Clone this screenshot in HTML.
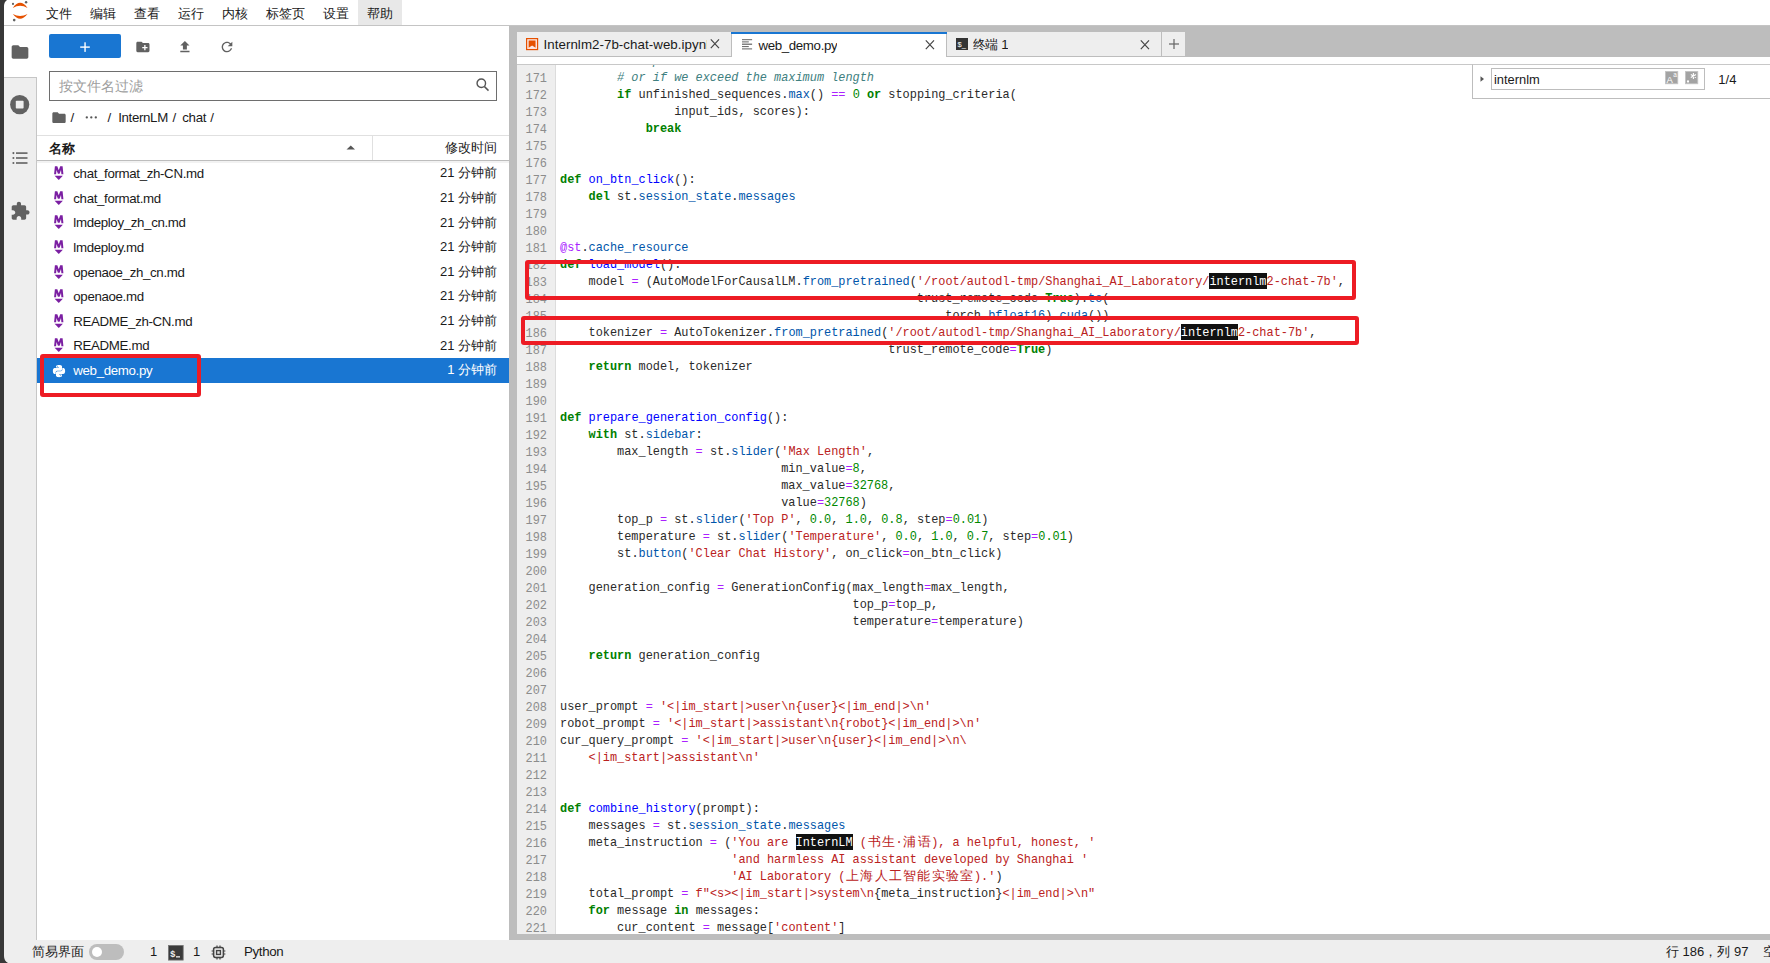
<!DOCTYPE html>
<html><head><meta charset="utf-8">
<style>
*{box-sizing:border-box;margin:0;padding:0}
html,body{width:1770px;height:963px;overflow:hidden;background:#fff}
body{position:relative;font-family:"Liberation Sans",sans-serif;font-size:12.7px;color:#1a1a1a}
.a{position:absolute}
.ui{font-family:"Liberation Sans",sans-serif;white-space:nowrap;line-height:1}
svg{position:absolute;overflow:visible}
/* menu */
#menubar{left:0;top:0;width:1770px;height:26px;background:#fff;border-bottom:1px solid #c4c4c4}
.mi{position:absolute;top:5.5px;font-size:13px;color:#1a1a1a;line-height:15px}
/* sidebar */
#side{left:4px;top:26px;width:33px;height:914px;background:#eeeeee;border-right:1px solid #c6c6c6}
#sideact{left:4px;top:26px;width:33px;height:52px;background:#fff;border-bottom:1px solid #c6c6c6}
/* file browser */
#fb{left:37px;top:26px;width:472px;height:914px;background:#fff}
.row{position:absolute;left:37px;width:472px;height:24.625px}
.fname{position:absolute;left:36.3px;top:5.1px;font-size:13.3px;letter-spacing:-0.35px;line-height:15px;color:#1a1a1a;white-space:nowrap}
.ftime{position:absolute;right:12px;top:4.3px;font-size:13px;line-height:15px;color:#1a1a1a;white-space:nowrap}
/* dock */
#dock{left:509px;top:26px;width:1261px;height:914px;background:#bdbdbd}
.tab{position:absolute;top:31px;height:26px;background:#eeeeee;border:1px solid #bdbdbd}
.tabt{position:absolute;top:37.6px;font-size:13.3px;letter-spacing:-0.35px;line-height:15px;color:#1a1a1a;white-space:nowrap;overflow:hidden}
#strip{left:517px;top:57px;width:1253px;height:8px;background:#fff;border-bottom:1px solid #c8c8c8}
#editor{left:517px;top:65px;width:1253px;height:869px;background:#fff;overflow:hidden}
#gutter{left:517px;top:65px;width:39px;height:869px;background:#eeeeee;border-right:1px solid #dcdcdc}
#codeclip{left:517px;top:65px;width:1253px;height:869px;overflow:hidden}
.ln{position:absolute;left:0;width:30px;text-align:right;font-family:"Liberation Mono",monospace;font-size:11.9px;line-height:17px;height:17px;color:#8c8c8c}
.cl{position:absolute;left:43px;white-space:pre;font-family:"Liberation Mono",monospace;font-size:11.9px;line-height:17px;height:17px;color:#2a2a2a}
.cj{font-style:normal;display:inline-block;width:14.294px;text-align:center;font-size:12.5px}
.c{color:#408080;font-style:italic}
.k{color:#008000;font-weight:bold}
.n{color:#008800}
.o{color:#aa22ff}
.d{color:#0000ff}
.p{color:#0055aa}
.s{color:#ba2121}
.m{color:#aa22ff}
.v{color:#2a2a2a}
.hl{background:#111;color:#fff;font-weight:normal;padding-top:1.6px}
.s .hl{color:#fff}
/* status */
#status{left:4px;top:940px;width:1766px;height:23px;background:#eeeeee}
.st{position:absolute;top:944.3px;font-size:13px;line-height:15px;color:#1a1a1a;white-space:nowrap}
.crumb{top:110px;font-size:13.3px;letter-spacing:-0.35px;line-height:15px;color:#1a1a1a}
.redbox{position:absolute;border:4px solid #ed1c24;border-radius:3px}
</style></head><body>

<!-- menubar -->
<div id="menubar" class="a"></div>
<div class="a" style="left:358px;top:0;width:44px;height:25px;background:#e8e8e8"></div>
<svg style="left:0;top:0" width="40" height="25" viewBox="0 0 40 25">
  <path d="M12.8 7.9 Q20.1 -2.2 27.5 7.9 Q20.1 3.6 12.8 7.9Z" fill="#e65100"/>
  <path d="M12.8 14 Q20.1 23.4 27.5 14 Q20.1 17.8 12.8 14Z" fill="#e65100"/>
  <circle cx="13" cy="3.9" r="1.05" fill="#616161"/>
  <circle cx="26.1" cy="2.3" r="1.2" fill="#616161"/>
  <circle cx="14.2" cy="20.1" r="1.3" fill="#616161"/>
</svg>
<div class="mi" style="left:46px">文件</div>
<div class="mi" style="left:90px">编辑</div>
<div class="mi" style="left:134px">查看</div>
<div class="mi" style="left:178px">运行</div>
<div class="mi" style="left:222px">内核</div>
<div class="mi" style="left:266px">标签页</div>
<div class="mi" style="left:323px">设置</div>
<div class="mi" style="left:367px">帮助</div>

<!-- left activity bar -->
<div id="side" class="a"></div>
<div id="sideact" class="a"></div>
<svg style="left:9.7px;top:42px" width="20" height="20" viewBox="0 0 24 24"><path fill="#616161" d="M10 4H4c-1.1 0-1.99.9-1.99 2L2 18c0 1.1.9 2 2 2h16c1.1 0 2-.9 2-2V8c0-1.1-.9-2-2-2h-8l-2-2z"/></svg>
<svg style="left:10px;top:95px" width="20" height="20" viewBox="0 0 20 20"><circle cx="9.7" cy="9.6" r="9.6" fill="#616161"/><rect x="5.8" y="5.7" width="7.8" height="7.8" rx="0.8" fill="#eeeeee"/></svg>
<svg style="left:12px;top:151px" width="18" height="14" viewBox="0 0 18 14">
  <circle cx="1.4" cy="2.1" r="1.05" fill="#616161"/><rect x="4" y="1.3" width="11.5" height="1.6" fill="#616161"/>
  <circle cx="1.4" cy="7" r="1.05" fill="#616161"/><rect x="4" y="6.2" width="11.5" height="1.6" fill="#616161"/>
  <circle cx="1.4" cy="12" r="1.05" fill="#616161"/><rect x="4" y="11.2" width="11.5" height="1.6" fill="#616161"/>
</svg>
<svg style="left:9.7px;top:201.3px" width="20.4" height="20.4" viewBox="0 0 24 24"><path fill="#616161" d="M20.5 11H19V7c0-1.1-.9-2-2-2h-4V3.5C13 2.12 11.88 1 10.5 1S8 2.12 8 3.5V5H4c-1.1 0-1.99.9-1.99 2v3.8H3.5c1.49 0 2.7 1.21 2.7 2.7s-1.21 2.7-2.7 2.7H2V20c0 1.1.9 2 2 2h3.8v-1.5c0-1.490 1.21-2.7 2.7-2.7 1.49 0 2.7 1.21 2.7 2.7V22H17c1.1 0 2-.9 2-2v-4h1.5c1.38 0 2.5-1.12 2.5-2.5S21.88 11 20.5 11z"/></svg>

<!-- file browser -->
<div id="fb" class="a"></div>
<div class="a" style="left:49px;top:34px;width:72px;height:24px;background:#1976d2;border-radius:2px"></div>
<svg style="left:79px;top:41px" width="12" height="12" viewBox="0 0 12 12"><rect x="5.35" y="1.3" width="1.4" height="9.6" fill="#fff"/><rect x="1.2" y="5.4" width="9.6" height="1.4" fill="#fff"/></svg>
<svg style="left:135px;top:38.9px" width="15.8" height="15.8" viewBox="0 0 24 24"><path fill="#616161" d="M20 6h-8l-2-2H4c-1.11 0-1.99.89-1.99 2L2 18c0 1.11.89 2 2 2h16c1.11 0 2-.89 2-2V8c0-1.11-.89-2-2-2zm-1 8h-3v3h-2v-3h-3v-2h3V9h2v3h3v2z"/></svg>
<svg style="left:176.6px;top:39.2px" width="15.8" height="15.8" viewBox="0 0 24 24"><path fill="#616161" d="M9 16h6v-6h4l-7-7-7 7h4zm-4 2h14v2H5z"/></svg>
<svg style="left:219.2px;top:38.9px" width="16" height="16" viewBox="0 0 24 24"><path fill="#616161" d="M17.65 6.35C16.2 4.9 14.21 4 12 4c-4.42 0-7.99 3.580-7.99 8s3.57 8 7.99 8c3.73 0 6.84-2.55 7.73-6h-2.08c-.82 2.33-3.04 4-5.65 4-3.31 0-6-2.69-6-6s2.69-6 6-6c1.66 0 3.14.69 4.22 1.78L13 11h7V4l-2.35 2.35z"/></svg>
<div class="a" style="left:49px;top:71px;width:448px;height:30px;border:1px solid #6e6e6e;background:#fff"></div>
<div class="a ui" style="left:58.8px;top:79.4px;font-size:14px;line-height:15px;color:#9e9e9e">按文件名过滤</div>
<svg style="left:474px;top:76px" width="18" height="18" viewBox="0 0 18 18"><circle cx="7.3" cy="7.3" r="4.25" fill="none" stroke="#555" stroke-width="1.4"/><line x1="10.5" y1="10.6" x2="14.5" y2="14.6" stroke="#555" stroke-width="1.5"/></svg>
<svg style="left:51px;top:111px" width="16" height="14" viewBox="0 0 24 21"><path fill="#616161" d="M10 4H4c-1.1 0-1.99.9-1.99 2L2 18c0 1.1.9 2 2 2h16c1.1 0 2-.9 2-2V8c0-1.1-.9-2-2-2h-8l-2-2z" transform="translate(0,-2)"/></svg>

<svg style="left:85px;top:115px" width="14" height="5" viewBox="0 0 14 5"><circle cx="1.8" cy="2.4" r="1.15" fill="#555"/><circle cx="6.3" cy="2.4" r="1.15" fill="#555"/><circle cx="10.8" cy="2.4" r="1.15" fill="#555"/></svg>
<div class="a ui crumb" style="left:70.4px">/</div><div class="a ui crumb" style="left:107.5px">/</div><div class="a ui crumb" style="left:118.2px">InternLM</div><div class="a ui crumb" style="left:172.6px">/</div><div class="a ui crumb" style="left:182.3px">chat</div><div class="a ui crumb" style="left:210.3px">/</div>

<!-- listing header -->
<div class="a" style="left:37px;top:135px;width:472px;height:1px;background:#e0e0e0"></div>
<div class="a" style="left:37px;top:160px;width:472px;height:1px;background:#bdbdbd"></div>
<div class="a" style="left:37px;top:161px;width:472px;height:1.5px;background:#f2f2f2"></div>
<div class="a" style="left:372px;top:136px;width:1px;height:24px;background:#e0e0e0"></div>
<div class="a ui" style="left:49px;top:140.5px;font-size:13px;line-height:15px;font-weight:bold;color:#1a1a1a">名称</div>
<svg style="left:345.5px;top:144.9px" width="10" height="5" viewBox="0 0 10 5"><path d="M0.5 4.6 L4.8 0.4 L9 4.6Z" fill="#555"/></svg>
<div class="a ui" style="left:445.4px;top:139.5px;font-size:13px;line-height:15px;color:#1a1a1a">修改时间</div>

<div class="row" style="top:161.000px;"><svg style="left:17px;top:5px" width="10" height="15" viewBox="0 0 10 15"><path fill="#7b1fa2" d="M0.1 8.2 L0.9 0.2 H3.3 L4.75 4.3 L6.2 0.2 H8.6 L9.4 8.2 H7.4 L7.0 3.9 L5.6 7.7 H3.9 L2.5 3.9 L2.1 8.2Z"/><path fill="#7b1fa2" d="M0.6 9.7 H8.9 L4.75 14.1 Z"/></svg><div class="fname" style="color:#1a1a1a">chat_format_zh-CN.md</div><div class="ftime" style="color:#1a1a1a">21 分钟前</div></div>
<div class="row" style="top:185.625px;"><svg style="left:17px;top:5px" width="10" height="15" viewBox="0 0 10 15"><path fill="#7b1fa2" d="M0.1 8.2 L0.9 0.2 H3.3 L4.75 4.3 L6.2 0.2 H8.6 L9.4 8.2 H7.4 L7.0 3.9 L5.6 7.7 H3.9 L2.5 3.9 L2.1 8.2Z"/><path fill="#7b1fa2" d="M0.6 9.7 H8.9 L4.75 14.1 Z"/></svg><div class="fname" style="color:#1a1a1a">chat_format.md</div><div class="ftime" style="color:#1a1a1a">21 分钟前</div></div>
<div class="row" style="top:210.250px;"><svg style="left:17px;top:5px" width="10" height="15" viewBox="0 0 10 15"><path fill="#7b1fa2" d="M0.1 8.2 L0.9 0.2 H3.3 L4.75 4.3 L6.2 0.2 H8.6 L9.4 8.2 H7.4 L7.0 3.9 L5.6 7.7 H3.9 L2.5 3.9 L2.1 8.2Z"/><path fill="#7b1fa2" d="M0.6 9.7 H8.9 L4.75 14.1 Z"/></svg><div class="fname" style="color:#1a1a1a">lmdeploy_zh_cn.md</div><div class="ftime" style="color:#1a1a1a">21 分钟前</div></div>
<div class="row" style="top:234.875px;"><svg style="left:17px;top:5px" width="10" height="15" viewBox="0 0 10 15"><path fill="#7b1fa2" d="M0.1 8.2 L0.9 0.2 H3.3 L4.75 4.3 L6.2 0.2 H8.6 L9.4 8.2 H7.4 L7.0 3.9 L5.6 7.7 H3.9 L2.5 3.9 L2.1 8.2Z"/><path fill="#7b1fa2" d="M0.6 9.7 H8.9 L4.75 14.1 Z"/></svg><div class="fname" style="color:#1a1a1a">lmdeploy.md</div><div class="ftime" style="color:#1a1a1a">21 分钟前</div></div>
<div class="row" style="top:259.500px;"><svg style="left:17px;top:5px" width="10" height="15" viewBox="0 0 10 15"><path fill="#7b1fa2" d="M0.1 8.2 L0.9 0.2 H3.3 L4.75 4.3 L6.2 0.2 H8.6 L9.4 8.2 H7.4 L7.0 3.9 L5.6 7.7 H3.9 L2.5 3.9 L2.1 8.2Z"/><path fill="#7b1fa2" d="M0.6 9.7 H8.9 L4.75 14.1 Z"/></svg><div class="fname" style="color:#1a1a1a">openaoe_zh_cn.md</div><div class="ftime" style="color:#1a1a1a">21 分钟前</div></div>
<div class="row" style="top:284.125px;"><svg style="left:17px;top:5px" width="10" height="15" viewBox="0 0 10 15"><path fill="#7b1fa2" d="M0.1 8.2 L0.9 0.2 H3.3 L4.75 4.3 L6.2 0.2 H8.6 L9.4 8.2 H7.4 L7.0 3.9 L5.6 7.7 H3.9 L2.5 3.9 L2.1 8.2Z"/><path fill="#7b1fa2" d="M0.6 9.7 H8.9 L4.75 14.1 Z"/></svg><div class="fname" style="color:#1a1a1a">openaoe.md</div><div class="ftime" style="color:#1a1a1a">21 分钟前</div></div>
<div class="row" style="top:308.750px;"><svg style="left:17px;top:5px" width="10" height="15" viewBox="0 0 10 15"><path fill="#7b1fa2" d="M0.1 8.2 L0.9 0.2 H3.3 L4.75 4.3 L6.2 0.2 H8.6 L9.4 8.2 H7.4 L7.0 3.9 L5.6 7.7 H3.9 L2.5 3.9 L2.1 8.2Z"/><path fill="#7b1fa2" d="M0.6 9.7 H8.9 L4.75 14.1 Z"/></svg><div class="fname" style="color:#1a1a1a">README_zh-CN.md</div><div class="ftime" style="color:#1a1a1a">21 分钟前</div></div>
<div class="row" style="top:333.375px;"><svg style="left:17px;top:5px" width="10" height="15" viewBox="0 0 10 15"><path fill="#7b1fa2" d="M0.1 8.2 L0.9 0.2 H3.3 L4.75 4.3 L6.2 0.2 H8.6 L9.4 8.2 H7.4 L7.0 3.9 L5.6 7.7 H3.9 L2.5 3.9 L2.1 8.2Z"/><path fill="#7b1fa2" d="M0.6 9.7 H8.9 L4.75 14.1 Z"/></svg><div class="fname" style="color:#1a1a1a">README.md</div><div class="ftime" style="color:#1a1a1a">21 分钟前</div></div>
<div class="row" style="top:358.000px;background:#1976d2;"><svg style="left:14.9px;top:5.9px" width="14" height="14" viewBox="0 0 24 24"><path fill="#fff" d="M11.9 1.5c-5.3 0-5 2.3-5 2.3v2.4h5.1v.7H4.9S1.5 6.5 1.5 11.9s3 5.2 3 5.2h1.8v-2.5s-.1-3 3-3h5c0 0 2.9 0 2.9-2.8V4.3s.4-2.8-5.3-2.8zM9.1 3.1c.5 0 .9.4.9.9s-.4.9-.9.9-.9-.4-.9-.9.4-.9.9-.9z"/><path fill="#fff" d="M12.1 22.5c5.3 0 5-2.3 5-2.3v-2.4h-5.1v-.7h7.1s3.4.4 3.4-5s-3-5.2-3-5.2h-1.8v2.5s.1 3-3 3h-5s-2.9 0-2.9 2.8v4.6s-.4 2.8 5.3 2.8zm2.8-1.6c-.5 0-.9-.4-.9-.9s.4-.9.9-.9.9.4.9.9-.4.9-.9.9z"/></svg><div class="fname" style="color:#fff">web_demo.py</div><div class="ftime" style="color:#fff">1 分钟前</div></div>

<!-- dock / editor -->
<div id="dock" class="a"></div>
<div class="tab" style="left:516px;width:216px"></div>
<div class="tab" style="left:946px;width:216px"></div>
<div class="tab" style="left:1161px;width:25px"></div>
<div class="tab" style="left:731px;width:216px;background:#fff;border-bottom:none;height:26px;border-top:none;top:32px"></div>
<div class="a" style="left:731px;top:32px;width:216px;height:2px;background:#1976d2"></div>
<!-- tab icons/text -->
<svg style="left:525.8px;top:37.8px" width="12.2" height="12.2" viewBox="0 0 12 12"><rect x="0.6" y="0.6" width="10.8" height="10.8" fill="#fbe9e7" stroke="#e65100" stroke-width="1.2"/><path d="M2.6 2.4 H9.4 V9.6 L6 7.4 L2.6 9.6Z" fill="#e65100"/></svg>
<div class="tabt" style="left:543.5px;width:163px;letter-spacing:0.06px;top:36.8px">Internlm2-7b-chat-web.ipynb</div>
<svg style="left:709px;top:38px" width="12" height="12" viewBox="0 0 12 12"><path d="M1.8 1.4 L10 10.1 M10 1.4 L1.8 10.1" stroke="#444" stroke-width="1.2"/></svg>
<svg style="left:741.9px;top:38.6px" width="11" height="11" viewBox="0 0 11 11"><rect x="0" y="0.2" width="10.1" height="1" fill="#616161"/><rect x="0" y="2.4" width="6.8" height="1" fill="#616161"/><rect x="0" y="4.6" width="10.1" height="1.2" fill="#616161"/><rect x="0" y="7.1" width="6.8" height="1" fill="#616161"/><rect x="0" y="9.4" width="10.1" height="1" fill="#616161"/></svg>
<div class="tabt" style="left:758.4px">web_demo.py</div>
<svg style="left:924px;top:39.2px" width="12" height="12" viewBox="0 0 12 12"><path d="M1.8 1.4 L10 10.1 M10 1.4 L1.8 10.1" stroke="#444" stroke-width="1.2"/></svg>
<svg style="left:956px;top:38px" width="12" height="12" viewBox="0 0 12 12"><rect x="0" y="0" width="12" height="12" fill="#333"/><text x="1.5" y="9" font-family="Liberation Sans" font-size="7.5" fill="#fff">$_</text></svg>
<div class="tabt" style="left:972.6px;top:36.8px">终端 1</div>
<svg style="left:1139px;top:38.7px" width="12" height="12" viewBox="0 0 12 12"><path d="M1.8 1.4 L10 10.1 M10 1.4 L1.8 10.1" stroke="#444" stroke-width="1.2"/></svg>
<svg style="left:1168px;top:38px" width="12" height="12" viewBox="0 0 12 12"><rect x="5.4" y="1" width="1.2" height="10" fill="#666"/><rect x="1" y="5.4" width="10" height="1.2" fill="#666"/></svg>

<div id="strip" class="a"></div>
<div id="editor" class="a"></div>
<div id="gutter" class="a"></div>
<div id="codeclip" class="a">
<div class="ln" style="top:-11.40px">170</div>
<div class="ln" style="top:5.60px">171</div>
<div class="ln" style="top:22.60px">172</div>
<div class="ln" style="top:39.60px">173</div>
<div class="ln" style="top:56.60px">174</div>
<div class="ln" style="top:73.60px">175</div>
<div class="ln" style="top:90.60px">176</div>
<div class="ln" style="top:107.60px">177</div>
<div class="ln" style="top:124.60px">178</div>
<div class="ln" style="top:141.60px">179</div>
<div class="ln" style="top:158.60px">180</div>
<div class="ln" style="top:175.60px">181</div>
<div class="ln" style="top:192.60px">182</div>
<div class="ln" style="top:209.60px">183</div>
<div class="ln" style="top:226.60px">184</div>
<div class="ln" style="top:243.60px">185</div>
<div class="ln" style="top:260.60px">186</div>
<div class="ln" style="top:277.60px">187</div>
<div class="ln" style="top:294.60px">188</div>
<div class="ln" style="top:311.60px">189</div>
<div class="ln" style="top:328.60px">190</div>
<div class="ln" style="top:345.60px">191</div>
<div class="ln" style="top:362.60px">192</div>
<div class="ln" style="top:379.60px">193</div>
<div class="ln" style="top:396.60px">194</div>
<div class="ln" style="top:413.60px">195</div>
<div class="ln" style="top:430.60px">196</div>
<div class="ln" style="top:447.60px">197</div>
<div class="ln" style="top:464.60px">198</div>
<div class="ln" style="top:481.60px">199</div>
<div class="ln" style="top:498.60px">200</div>
<div class="ln" style="top:515.60px">201</div>
<div class="ln" style="top:532.60px">202</div>
<div class="ln" style="top:549.60px">203</div>
<div class="ln" style="top:566.60px">204</div>
<div class="ln" style="top:583.60px">205</div>
<div class="ln" style="top:600.60px">206</div>
<div class="ln" style="top:617.60px">207</div>
<div class="ln" style="top:634.60px">208</div>
<div class="ln" style="top:651.60px">209</div>
<div class="ln" style="top:668.60px">210</div>
<div class="ln" style="top:685.60px">211</div>
<div class="ln" style="top:702.60px">212</div>
<div class="ln" style="top:719.60px">213</div>
<div class="ln" style="top:736.60px">214</div>
<div class="ln" style="top:753.60px">215</div>
<div class="ln" style="top:770.60px">216</div>
<div class="ln" style="top:787.60px">217</div>
<div class="ln" style="top:804.60px">218</div>
<div class="ln" style="top:821.60px">219</div>
<div class="ln" style="top:838.60px">220</div>
<div class="ln" style="top:855.60px">221</div>
<div class="cl" style="top:-12.20px">        <span class="c"># stop when each sentence is finished</span></div>
<div class="cl" style="top:4.80px">        <span class="c"># or if we exceed the maximum length</span></div>
<div class="cl" style="top:21.80px">        <span class="k">if</span> <span class="v">unfinished_sequences</span>.<span class="p">max</span>() <span class="o">==</span> <span class="n">0</span> <span class="k">or</span> <span class="v">stopping_criteria</span>(</div>
<div class="cl" style="top:38.80px">                <span class="v">input_ids</span>, <span class="v">scores</span>):</div>
<div class="cl" style="top:55.80px">            <span class="k">break</span></div>
<div class="cl" style="top:72.80px"></div>
<div class="cl" style="top:89.80px"></div>
<div class="cl" style="top:106.80px"><span class="k">def</span> <span class="d">on_btn_click</span>():</div>
<div class="cl" style="top:123.80px">    <span class="k">del</span> <span class="v">st</span>.<span class="p">session_state</span>.<span class="p">messages</span></div>
<div class="cl" style="top:140.80px"></div>
<div class="cl" style="top:157.80px"></div>
<div class="cl" style="top:174.80px"><span class="m">@st</span>.<span class="p">cache_resource</span></div>
<div class="cl" style="top:191.80px"><span class="k">def</span> <span class="d">load_model</span>():</div>
<div class="cl" style="top:208.80px">    <span class="v">model</span> <span class="o">=</span> (<span class="v">AutoModelForCausalLM</span>.<span class="p">from_pretrained</span>(<span class="s">&#x27;/root/autodl-tmp/Shanghai_AI_Laboratory/<b class="hl">internlm</b>2-chat-7b&#x27;</span>,</div>
<div class="cl" style="top:225.80px">                                                  <span class="v">trust_remote_code</span><span class="o">=</span><span class="k">True</span>).<span class="p">to</span>(</div>
<div class="cl" style="top:242.80px">                                                      <span class="v">torch</span>.<span class="p">bfloat16</span>).<span class="p">cuda</span>())</div>
<div class="cl" style="top:259.80px">    <span class="v">tokenizer</span> <span class="o">=</span> <span class="v">AutoTokenizer</span>.<span class="p">from_pretrained</span>(<span class="s">&#x27;/root/autodl-tmp/Shanghai_AI_Laboratory/<b class="hl">internlm</b>2-chat-7b&#x27;</span>,</div>
<div class="cl" style="top:276.80px">                                              <span class="v">trust_remote_code</span><span class="o">=</span><span class="k">True</span>)</div>
<div class="cl" style="top:293.80px">    <span class="k">return</span> <span class="v">model</span>, <span class="v">tokenizer</span></div>
<div class="cl" style="top:310.80px"></div>
<div class="cl" style="top:327.80px"></div>
<div class="cl" style="top:344.80px"><span class="k">def</span> <span class="d">prepare_generation_config</span>():</div>
<div class="cl" style="top:361.80px">    <span class="k">with</span> <span class="v">st</span>.<span class="p">sidebar</span>:</div>
<div class="cl" style="top:378.80px">        <span class="v">max_length</span> <span class="o">=</span> <span class="v">st</span>.<span class="p">slider</span>(<span class="s">&#x27;Max Length&#x27;</span>,</div>
<div class="cl" style="top:395.80px">                               <span class="v">min_value</span><span class="o">=</span><span class="n">8</span>,</div>
<div class="cl" style="top:412.80px">                               <span class="v">max_value</span><span class="o">=</span><span class="n">32768</span>,</div>
<div class="cl" style="top:429.80px">                               <span class="v">value</span><span class="o">=</span><span class="n">32768</span>)</div>
<div class="cl" style="top:446.80px">        <span class="v">top_p</span> <span class="o">=</span> <span class="v">st</span>.<span class="p">slider</span>(<span class="s">&#x27;Top P&#x27;</span>, <span class="n">0.0</span>, <span class="n">1.0</span>, <span class="n">0.8</span>, <span class="v">step</span><span class="o">=</span><span class="n">0.01</span>)</div>
<div class="cl" style="top:463.80px">        <span class="v">temperature</span> <span class="o">=</span> <span class="v">st</span>.<span class="p">slider</span>(<span class="s">&#x27;Temperature&#x27;</span>, <span class="n">0.0</span>, <span class="n">1.0</span>, <span class="n">0.7</span>, <span class="v">step</span><span class="o">=</span><span class="n">0.01</span>)</div>
<div class="cl" style="top:480.80px">        <span class="v">st</span>.<span class="p">button</span>(<span class="s">&#x27;Clear Chat History&#x27;</span>, <span class="v">on_click</span><span class="o">=</span><span class="v">on_btn_click</span>)</div>
<div class="cl" style="top:497.80px"></div>
<div class="cl" style="top:514.80px">    <span class="v">generation_config</span> <span class="o">=</span> <span class="v">GenerationConfig</span>(<span class="v">max_length</span><span class="o">=</span><span class="v">max_length</span>,</div>
<div class="cl" style="top:531.80px">                                         <span class="v">top_p</span><span class="o">=</span><span class="v">top_p</span>,</div>
<div class="cl" style="top:548.80px">                                         <span class="v">temperature</span><span class="o">=</span><span class="v">temperature</span>)</div>
<div class="cl" style="top:565.80px"></div>
<div class="cl" style="top:582.80px">    <span class="k">return</span> <span class="v">generation_config</span></div>
<div class="cl" style="top:599.80px"></div>
<div class="cl" style="top:616.80px"></div>
<div class="cl" style="top:633.80px"><span class="v">user_prompt</span> <span class="o">=</span> <span class="s">&#x27;&lt;|im_start|&gt;user\n{user}&lt;|im_end|&gt;\n&#x27;</span></div>
<div class="cl" style="top:650.80px"><span class="v">robot_prompt</span> <span class="o">=</span> <span class="s">&#x27;&lt;|im_start|&gt;assistant\n{robot}&lt;|im_end|&gt;\n&#x27;</span></div>
<div class="cl" style="top:667.80px"><span class="v">cur_query_prompt</span> <span class="o">=</span> <span class="s">&#x27;&lt;|im_start|&gt;user\n{user}&lt;|im_end|&gt;\n\</span></div>
<div class="cl" style="top:684.80px"><span class="s">    &lt;|im_start|&gt;assistant\n&#x27;</span></div>
<div class="cl" style="top:701.80px"></div>
<div class="cl" style="top:718.80px"></div>
<div class="cl" style="top:735.80px"><span class="k">def</span> <span class="d">combine_history</span>(<span class="v">prompt</span>):</div>
<div class="cl" style="top:752.80px">    <span class="v">messages</span> <span class="o">=</span> <span class="v">st</span>.<span class="p">session_state</span>.<span class="p">messages</span></div>
<div class="cl" style="top:769.80px">    <span class="v">meta_instruction</span> <span class="o">=</span> (<span class="s">&#x27;You are <b class="hl">InternLM</b> (<i class="cj">书</i><i class="cj">生</i>·<i class="cj">浦</i><i class="cj">语</i>), a helpful, honest, &#x27;</span></div>
<div class="cl" style="top:786.80px">                        <span class="s">&#x27;and harmless AI assistant developed by Shanghai &#x27;</span></div>
<div class="cl" style="top:803.80px">                        <span class="s">&#x27;AI Laboratory (<i class="cj">上</i><i class="cj">海</i><i class="cj">人</i><i class="cj">工</i><i class="cj">智</i><i class="cj">能</i><i class="cj">实</i><i class="cj">验</i><i class="cj">室</i>).&#x27;</span>)</div>
<div class="cl" style="top:820.80px">    <span class="v">total_prompt</span> <span class="o">=</span> <span class="s">f&quot;&lt;s&gt;&lt;|im_start|&gt;system\n</span>{meta_instruction}<span class="s">&lt;|im_end|&gt;\n&quot;</span></div>
<div class="cl" style="top:837.80px">    <span class="k">for</span> <span class="v">message</span> <span class="k">in</span> <span class="v">messages</span>:</div>
<div class="cl" style="top:854.80px">        <span class="v">cur_content</span> <span class="o">=</span> <span class="v">message</span>[<span class="s">&#x27;content&#x27;</span>]</div>
</div>
<div class="a" style="left:509px;top:934px;width:1261px;height:6px;background:#bdbdbd"></div>

<!-- find widget -->
<div class="a" style="left:1472px;top:64px;width:298px;height:34.5px;background:#fff;border-left:1px solid #bdbdbd;border-bottom:1px solid #bdbdbd;border-top:1px solid #c8c8c8"></div>
<svg style="left:1478px;top:75px" width="8" height="8" viewBox="0 0 8 8"><path d="M2.5 1.2 L6 4 L2.5 6.8Z" fill="#555"/></svg>
<div class="a" style="left:1491px;top:68px;width:214px;height:22px;border:1px solid #bdbdbd;background:#fff"></div>
<div class="a ui" style="left:1494px;top:71.5px;font-size:12.9px;line-height:15px;color:#1a1a1a">internlm</div>
<svg style="left:1665.4px;top:71.1px" width="13.2" height="13.2" viewBox="0 0 13.2 13.2"><rect x="0.4" y="0.4" width="12.4" height="12.4" fill="#a3a3a3" stroke="#c4c4c4" stroke-width="0.8"/><text x="1.6" y="11.6" font-family="Liberation Sans" font-size="9.5" fill="#fff">A</text><text x="8.2" y="6.3" font-family="Liberation Sans" font-size="6.5" fill="#fff">a</text></svg>
<svg style="left:1685.3px;top:71.1px" width="13.2" height="13.2" viewBox="0 0 13.2 13.2"><rect x="0.4" y="0.4" width="12.4" height="12.4" fill="#a3a3a3" stroke="#c4c4c4" stroke-width="0.8"/><circle cx="3" cy="10.5" r="1.15" fill="#fff"/><path d="M8.4 2.1V8.1M5.8 3.6L11 6.6M11 3.6L5.8 6.6" stroke="#fff" stroke-width="1.1"/></svg>
<div class="a ui" style="left:1718.3px;top:71.5px;font-size:13px;line-height:15px;color:#1a1a1a">1/4</div>

<!-- status bar -->
<div id="status" class="a"></div>
<div class="st" style="left:32px">简易界面</div>
<div class="a" style="left:89px;top:944px;width:35px;height:16px;border-radius:8px;background:#bdbdbd"></div>
<div class="a" style="left:91.6px;top:947px;width:10px;height:10px;border-radius:50%;background:#fff"></div>
<div class="st" style="left:150px">1</div>
<svg style="left:168.2px;top:945.1px" width="15.6" height="15.5" viewBox="0 0 15.6 15.5"><rect x="0.4" y="0.4" width="14.8" height="14.7" fill="#3a3a3a" stroke="#777" stroke-width="0.8"/><text x="2.3" y="12.0" font-family="Liberation Sans" font-size="9" font-weight="bold" fill="#eee">$</text><rect x="8" y="11.2" width="4" height="1.3" fill="#eee"/></svg>
<div class="st" style="left:193px">1</div>
<svg style="left:210.5px;top:944.5px" width="15" height="15" viewBox="0 0 15 15"><rect x="2.6" y="2.6" width="9.8" height="9.8" rx="1.8" fill="#e0e0e0" stroke="#444" stroke-width="1.5"/><rect x="5.6" y="5.6" width="3.8" height="3.8" fill="none" stroke="#444" stroke-width="1.3"/><path d="M6 0.6v2M9 0.6v2M6 12.4v2M9 12.4v2M0.6 6h2M0.6 9h2M12.4 6h2M12.4 9h2" stroke="#444" stroke-width="1.2"/></svg>
<div class="st" style="left:244px;font-size:13.3px;letter-spacing:-0.35px">Python</div>
<div class="st" style="left:1666px">行 186，列 97</div>
<div class="st" style="left:1763px">空</div>

<!-- red annotation boxes -->
<div class="redbox" style="left:525.3px;top:260.4px;width:831px;height:39.3px"></div>
<div class="redbox" style="left:520.5px;top:315.5px;width:838.6px;height:29.4px"></div>
<div class="redbox" style="left:40.2px;top:354.1px;width:160.8px;height:42.6px"></div>

<!-- window edge -->
<svg style="left:0;top:0" width="12" height="963" viewBox="0 0 12 963">
  <path d="M0 0 H7 Q4 2 4 6 V956 Q4 961 8 963 H0Z" fill="#383838"/>
</svg>
</body></html>
